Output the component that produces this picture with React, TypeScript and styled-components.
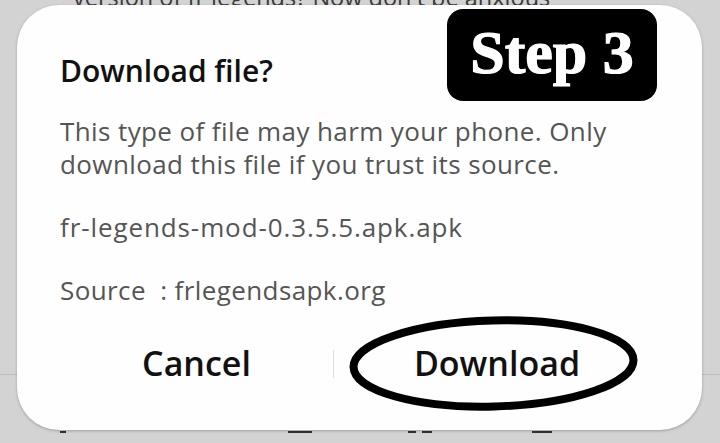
import React from "react";
import styled, { createGlobalStyle } from "styled-components";

const GlobalStyle = createGlobalStyle`
  html, body {
    margin: 0;
    padding: 0;
    background: #d3d3d3;
  }
  body {
    width: 720px;
    height: 443px;
    overflow: hidden;
    font-family: "Open Sans", "Noto Sans", sans-serif;
  }
`;

const Screen = styled.div`
  position: relative;
  width: 720px;
  height: 443px;
  overflow: hidden;
  background: #d3d3d3;
  display: flex;
  flex-direction: column;
`;

const ArticleClip = styled.div`
  height: 7px;
  overflow: hidden;
  display: flex;
  align-items: flex-end;
  padding-left: 73px;
`;

const ArticleText = styled.p`
  margin: 0 0 -2px;
  font-size: 23.5px;
  line-height: 1;
  color: #3a3a3a;
  white-space: nowrap;
`;

const Spacer = styled.div`
  flex: 0 0 367px;
`;

const Rule = styled.div`
  height: 1px;
  background: #bdbdbd;
`;

const NavRow = styled.div`
  margin-top: 56px;
  display: flex;
  align-items: flex-start;
`;

const NavMark = styled.span<{ $left: number; $w: number }>`
  display: block;
  margin-left: ${(p) => p.$left}px;
  width: ${(p) => p.$w}px;
  height: 2px;
  background: #333;
`;

const Dialog = styled.div`
  position: absolute;
  left: 17px;
  top: 5px;
  width: 685px;
  height: 425px;
  box-sizing: border-box;
  background: #fefefe;
  border-radius: 42px;
  box-shadow: 0 1px 3px rgba(0, 0, 0, 0.25);
  padding: 48px 0 0;
  display: flex;
  flex-direction: column;
`;

const Title = styled.h2`
  margin: 0;
  padding: 0 43px;
  font-size: 30px;
  line-height: 36px;
  font-weight: 600;
  color: #111;
`;

const Body = styled.p<{ $gap: number; $spacing?: number }>`
  margin: ${(p) => p.$gap}px 0 0;
  padding: 0 43px;
  font-size: 26px;
  line-height: 33px;
  letter-spacing: ${(p) => p.$spacing ?? 0.4}px;
  font-weight: 400;
  color: #555;
  white-space: nowrap;
`;

const Buttons = styled.div`
  margin-top: 36px;
  display: grid;
  grid-template-columns: 273px 1px 1fr;
  align-items: center;
  padding: 0 42px 0 43px;
`;

const Action = styled.button`
  position: relative;
  border: 0;
  background: transparent;
  padding: 0;
  font-family: inherit;
  font-size: 34px;
  line-height: 41px;
  font-weight: 600;
  color: #111;
  text-align: center;
  cursor: pointer;
`;

const Separator = styled.div`
  width: 1px;
  height: 28px;
  background: #dedede;
`;

const Ring = styled.svg`
  position: absolute;
  left: 15px;
  top: -27px;
  width: 289px;
  height: 95px;
  overflow: visible;
  pointer-events: none;
`;

const StepBadge = styled.div`
  position: absolute;
  left: 447px;
  top: 9px;
  width: 210px;
  height: 92px;
  box-sizing: border-box;
  border-radius: 16px;
  background: #000;
  display: flex;
  justify-content: center;
  align-items: flex-start;
  padding-top: 12px;
`;

const StepText = styled.span`
  font-family: "Liberation Serif", "Times New Roman", serif;
  font-weight: 700;
  font-size: 62px;
  line-height: 62px;
  color: #fff;
  -webkit-text-stroke: 1.2px #fff;
  white-space: nowrap;
`;

export default function App() {
  return (
    <>
      <GlobalStyle />
      <Screen>
        <ArticleClip>
          <ArticleText>version of fr legends? Now don't be anxious</ArticleText>
        </ArticleClip>
        <Spacer />
        <Rule />
        <NavRow>
          <NavMark $left={60} $w={6} />
          <NavMark $left={222} $w={24} />
          <NavMark $left={96} $w={8} />
          <NavMark $left={6} $w={10} />
          <NavMark $left={100} $w={20} />
        </NavRow>

        <Dialog>
          <Title>Download file?</Title>
          <Body $gap={26}>
            This type of file may harm your phone. Only
            <br />
            download this file if you trust its source.
          </Body>
          <Body $gap={30} $spacing={0.9}>
            fr-legends-mod-0.3.5.5.apk.apk
          </Body>
          <Body $gap={30}>Source&nbsp; : frlegendsapk.org</Body>
          <Buttons>
            <Action>Cancel</Action>
            <Separator />
            <Action>
              Download
              <Ring viewBox="0 0 289 95">
                <ellipse
                  cx="144.5"
                  cy="47.5"
                  rx="140"
                  ry="43"
                  fill="none"
                  stroke="#000"
                  strokeWidth="8"
                  transform="rotate(-1.5 144.5 47.5)"
                />
              </Ring>
            </Action>
          </Buttons>
        </Dialog>

        <StepBadge>
          <StepText>Step 3</StepText>
        </StepBadge>
      </Screen>
    </>
  );
}
